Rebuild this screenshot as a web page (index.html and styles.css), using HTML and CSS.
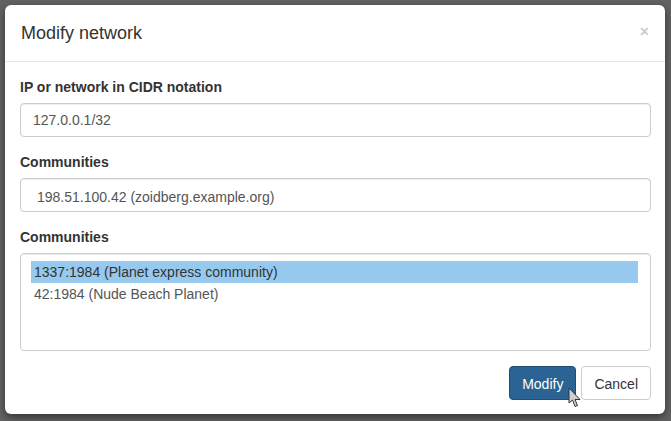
FILE: index.html
```html
<!DOCTYPE html>
<html>
<head>
<meta charset="utf-8">
<title>Modify network</title>
<link rel="stylesheet" href="styles.css">
</head>
<body>
<div class="backdrop">
  <div class="modal">
    <div class="modal-header">
      <h4 class="modal-title">Modify network</h4>
      <span class="close">×</span>
    </div>
    <div class="modal-body">
      <div class="form-group">
        <label class="label">IP or network in CIDR notation</label>
        <div class="form-control">127.0.0.1/32</div>
      </div>
      <div class="form-group">
        <label class="label">Communities</label>
        <div class="form-control tagged">198.51.100.42 (zoidberg.example.org)</div>
      </div>
      <div class="form-group">
        <label class="label">Communities</label>
        <div class="listbox">
          <div class="option selected">1337:1984 (Planet express community)</div>
          <div class="option">42:1984 (Nude Beach Planet)</div>
        </div>
      </div>
      <div class="actions">
        <span class="btn btn-primary">Modify
          <svg class="cursor" width="16" height="22" viewBox="0 0 16 22">
            <path d="M2 1 L2 16 L5.5 13 L8 19.5 L10.5 18.5 L8 12.5 L13 12.5 Z" fill="#cfcfcf" stroke="#333" stroke-width="1" stroke-linejoin="round"/>
          </svg>
        </span>
        <span class="btn btn-default">Cancel</span>
      </div>
    </div>
  </div>
</div>
</body>
</html>
```
FILE: styles.css
```css
html, body {
  margin: 0;
  padding: 0;
}
body {
  background: #636363;
  font-family: "Liberation Sans", Arial, sans-serif;
  font-size: 14px;
  line-height: 20px;
  color: #333;
}
.backdrop {
  padding: 5px 6px 8px 5px;
  height: 421px;
  box-sizing: border-box;
}
.modal {
  background: #fff;
  border-radius: 6px;
  box-shadow: 0 3px 9px rgba(0, 0, 0, 0.5);
  width: 660px;
}
.modal-header {
  padding: 15px 15px 15px 16px;
  border-bottom: 1px solid #e5e5e5;
  display: flex;
  justify-content: space-between;
  align-items: center;
  height: 26px;
}
.modal-title {
  margin: 0;
  font-size: 18px;
  font-weight: normal;
  line-height: 26px;
  color: #333;
}
.close {
  font-size: 16px;
  font-weight: bold;
  color: #000;
  opacity: 0.2;
  line-height: 20px;
  margin-right: 1px;
  margin-top: -2px;
}
.modal-body {
  padding: 15px 14px 14px 15px;
}
.form-group {
  margin-bottom: 15px;
}
.label {
  display: block;
  font-weight: bold;
  margin-bottom: 6px;
}
.form-control {
  height: 34px;
  box-sizing: border-box;
  border: 1px solid #ccc;
  border-radius: 4px;
  padding: 6px 12px;
  color: #555;
  box-shadow: inset 0 1px 1px rgba(0, 0, 0, 0.075);
}
.tagged {
  padding-left: 16px;
  padding-top: 8px;
}
.listbox {
  height: 98px;
  box-sizing: border-box;
  border: 1px solid #ccc;
  border-radius: 4px;
  padding: 7px 12px 6px 10px;
  color: #555;
  box-shadow: inset 0 1px 1px rgba(0, 0, 0, 0.075);
}
.option {
  padding: 1px 3px;
  line-height: 20px;
}
.option.selected {
  background: #97c9ee;
  color: #333;
}
.actions {
  display: flex;
  justify-content: flex-end;
  gap: 5px;
}
.btn {
  display: inline-block;
  height: 34px;
  box-sizing: border-box;
  padding: 7px 12px 5px;
  border: 1px solid transparent;
  border-radius: 4px;
  font-size: 14px;
  line-height: 20px;
}
.btn-primary {
  position: relative;
  background: #2a6394;
  border-color: #1f4e78;
  color: #fff;
}
.btn-default {
  background: #fff;
  border-color: #ccc;
  color: #333;
}
.cursor {
  position: absolute;
  left: 57px;
  top: 20px;
}
```
